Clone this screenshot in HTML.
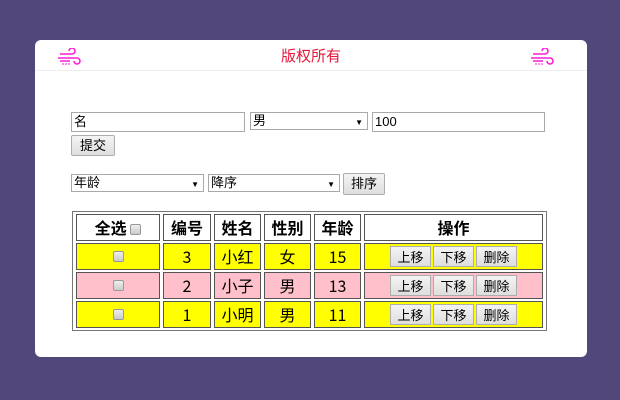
<!DOCTYPE html>
<html><head><meta charset="utf-8"><style>
*{box-sizing:border-box}
body{margin:0;width:620px;height:400px;background:#51477b;font-family:"Liberation Sans","Noto Sans CJK SC",sans-serif;position:relative;overflow:hidden}
.card{position:absolute;left:35px;top:40px;width:552px;height:317px;background:#fff;border-radius:6px}
.hd{position:absolute;left:0;top:0;width:552px;height:31px;border-bottom:1px solid #eee;text-align:center;color:#e8173a;font-size:15px;line-height:34px}
.ic{position:absolute;top:8px}
.f{position:absolute;font-size:13px;color:#000;background:#fff}
.in{border:1px solid #a9a9a9;height:20px;padding:1px 2px;line-height:16px}
.sel{border:1px solid #a9a9a9;height:18px;padding:0 2px;line-height:16px}
.sel:after{content:"▼";position:absolute;right:4px;top:2px;font-size:8px}
.btn{border:1px solid #adadad;background:linear-gradient(#f4f4f4,#dedede);height:21px;line-height:19px;text-align:center;border-radius:2px}
table{position:absolute;left:72px;top:211px;width:475px;table-layout:fixed;border:1px solid #777;border-spacing:3px 2px;font-size:16px;font-family:"Noto Sans CJK SC",sans-serif}
td,th{border:1px solid #555;text-align:center;height:27px;padding:0;line-height:25px;vertical-align:middle;font-weight:normal;overflow:hidden}
th{background:#fff;font-weight:bold}
.y td{background:#ff0}.p td{background:#ffc0cb}
.z{font-size:0;line-height:0}
.cb{display:inline-block;width:11px;height:11px;border:1px solid #999;background:linear-gradient(#eee,#ccc);border-radius:2px;vertical-align:middle}
.b{display:inline-block;width:41px;height:21px;border:1px solid #adadad;background:linear-gradient(#f4f4f4,#dedede);font-size:13px;line-height:19px;margin:0 1px;vertical-align:middle}
</style></head><body>
<div class="card">
<div class="hd">版权所有</div>
<svg class="ic" style="left:22px" width="26" height="18" viewBox="0 0 26 18" fill="none" stroke="#ff1fd8" stroke-width="1.6"><path d="M3 6h12a3 3 0 1 0-3-3M1 10h19a3 3 0 1 1-3 3M3 13h10"/><path d="M6 15v2M9 15v2M12 15v2" stroke-width="1"/></svg>
<svg class="ic" style="left:495px" width="26" height="18" viewBox="0 0 26 18" fill="none" stroke="#ff1fd8" stroke-width="1.6"><path d="M3 6h12a3 3 0 1 0-3-3M1 10h19a3 3 0 1 1-3 3M3 13h10"/><path d="M6 15v2M9 15v2M12 15v2" stroke-width="1"/></svg>
</div>
<div class="f in" style="left:71px;top:112px;width:174px">名</div>
<div class="f sel" style="left:250px;top:112px;width:118px">男</div>
<div class="f in" style="left:372px;top:112px;width:173px">100</div>
<div class="f btn" style="left:71px;top:135px;width:44px">提交</div>
<div class="f sel" style="left:71px;top:174px;width:133px">年龄</div>
<div class="f sel" style="left:208px;top:174px;width:132px">降序</div>
<div class="f btn" style="left:343px;top:173px;width:42px;height:22px">排序</div>
<table>
<colgroup><col style="width:84px"><col style="width:48px"><col style="width:47px"><col style="width:47px"><col style="width:47px"><col></colgroup>
<tr><th>全选 <span class="cb"></span></th><th>编号</th><th>姓名</th><th>性别</th><th>年龄</th><th>操作</th></tr>
<tr class="y"><td class="z"><span class="cb"></span></td><td>3</td><td>小红</td><td>女</td><td>15</td><td class="z"><span class="b">上移</span><span class="b">下移</span><span class="b">删除</span></td></tr>
<tr class="p"><td class="z"><span class="cb"></span></td><td>2</td><td>小子</td><td>男</td><td>13</td><td class="z"><span class="b">上移</span><span class="b">下移</span><span class="b">删除</span></td></tr>
<tr class="y"><td class="z"><span class="cb"></span></td><td>1</td><td>小明</td><td>男</td><td>11</td><td class="z"><span class="b">上移</span><span class="b">下移</span><span class="b">删除</span></td></tr>
</table>
</body></html>
